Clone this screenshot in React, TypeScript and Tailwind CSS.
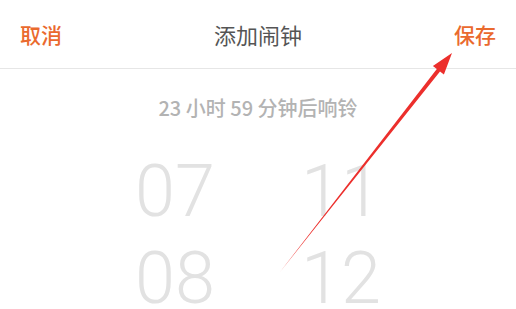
import React from 'react';

export default function App() {
  const cjk = { fontFamily: '"Noto Sans CJK SC", "Noto Sans", sans-serif' };
  return (
    <div className="relative w-[516px] h-[309px] overflow-hidden bg-white" style={cjk}>
      {/* 顶栏 */}
      <header className="h-[69px] flex items-center justify-between px-[20px] border-b border-[#e6e6e6]">
        <button className="text-[21px] font-medium text-[#ea6a2e] leading-none">取消</button>
        <h1 className="text-[22px] text-[#555555] leading-none">添加闹钟</h1>
        <button className="text-[21px] font-medium text-[#ea6a2e] leading-none">保存</button>
      </header>

      <p className="mt-[29px] text-center text-[20px] font-medium text-[#b3b3b3] leading-none">
        23 小时 59 分钟后响铃
      </p>

      {/* 时间选择 */}
      <div
        className="mt-[30px] flex justify-center gap-[90px] text-[72px] font-light text-[#e2e2e2] leading-[87px]"
        style={{ fontFamily: 'Roboto, "Liberation Sans", sans-serif' }}
      >
        <div className="flex flex-col items-center w-[76px]">
          <span>07</span>
          <span>08</span>
        </div>
        <div className="flex flex-col items-center w-[76px]">
          <span>11</span>
          <span>12</span>
        </div>
      </div>

      {/* 标注箭头 */}
      <svg className="absolute inset-0 pointer-events-none" width="516" height="309" viewBox="0 0 516 309">
        <polygon
          points="280,272 440,71.5 443.9,74.6 452,53 432.9,66 436.8,69.1"
          fill="#ec2f2c"
        />
      </svg>
    </div>
  );
}
